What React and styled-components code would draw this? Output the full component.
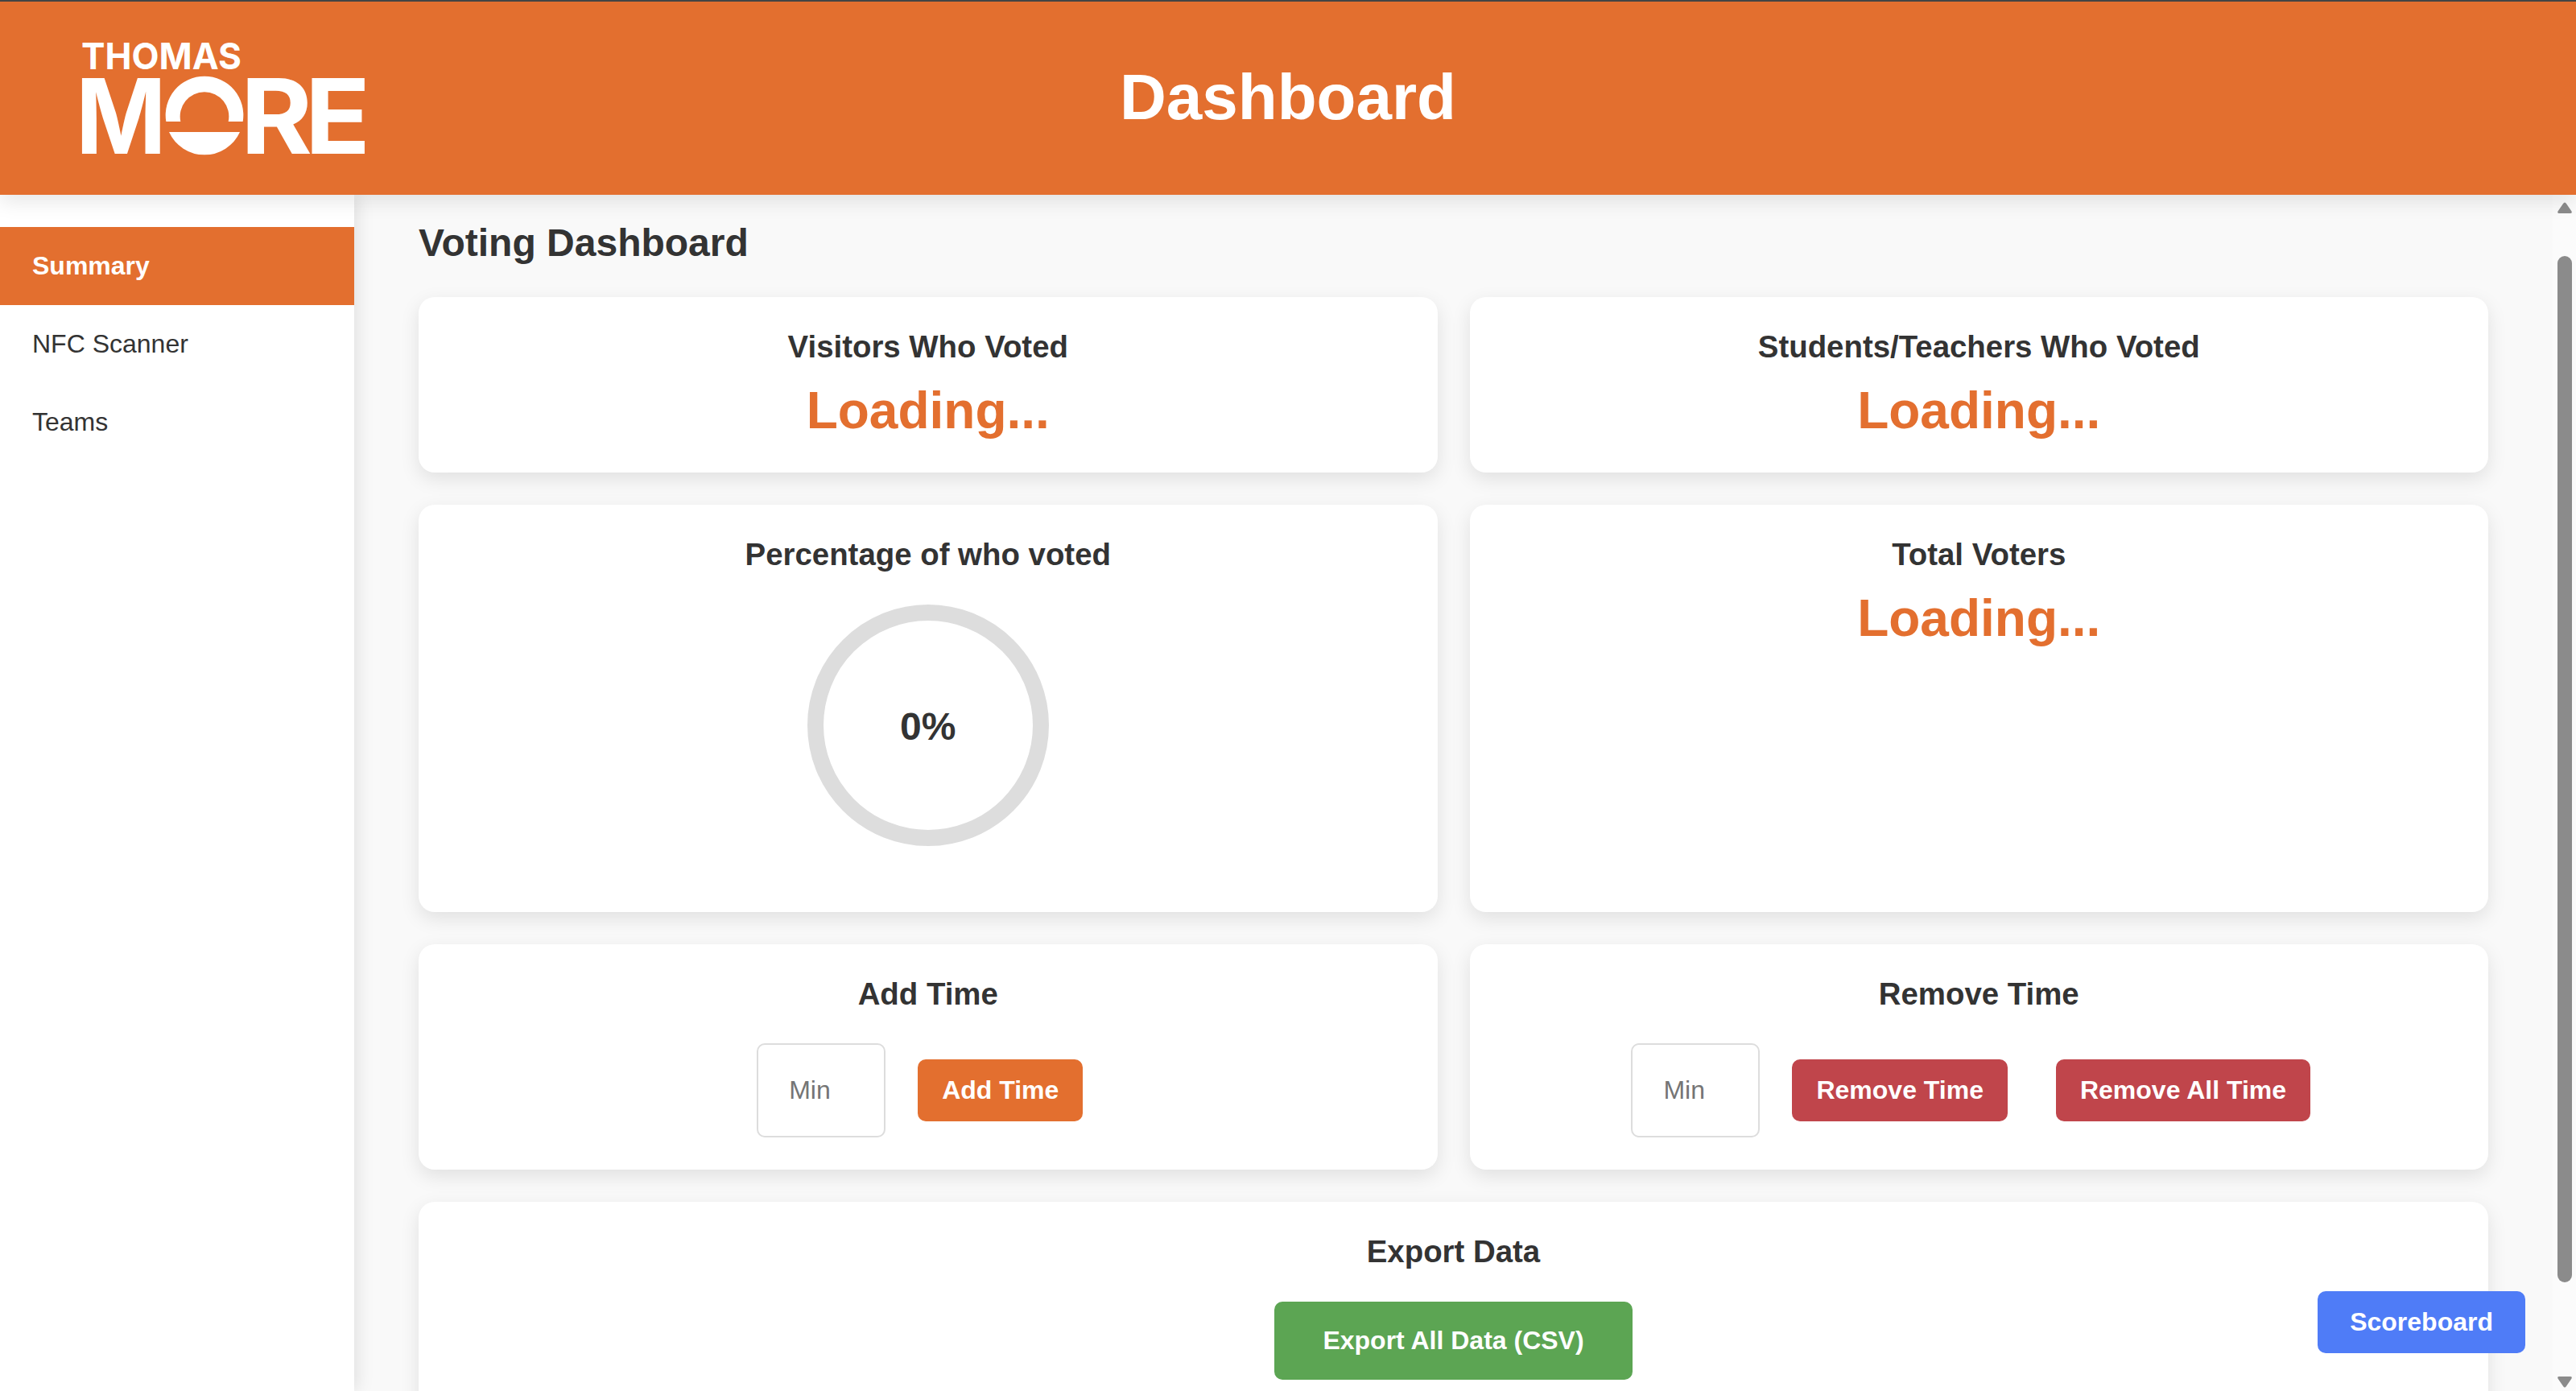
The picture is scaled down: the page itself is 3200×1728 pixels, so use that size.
import React from 'react';
import styled, { createGlobalStyle } from 'styled-components';

const ORANGE = '#e36f2f';

const GlobalStyle = createGlobalStyle`
  html, body {
    margin: 0;
    height: 100%;
    overflow: hidden;
    font-family: "Liberation Sans", Arial, sans-serif;
    color: #333;
  }
  #root {
    height: 100%;
  }
`;

const Logo = () => (
  <LogoSvg viewBox="0 0 1200 540" aria-label="Thomas More">
    <LogoThomas x="63" y="168" textLength="597" lengthAdjust="spacingAndGlyphs">THOMAS</LogoThomas>
    <LogoMore x="42" y="484" textLength="338" lengthAdjust="spacingAndGlyphs">M</LogoMore>
    <path
      fill="#fff"
      d="M379 363 A145 145 0 1 1 665 363 L611 363 A91 91 0 1 0 433 363 Z"
    />
    <path fill="#fff" d="M390 402 L654 402 A145 145 0 0 1 390 402 Z" />
    <LogoMore x="656" y="484" textLength="268" lengthAdjust="spacingAndGlyphs">R</LogoMore>
    <LogoMore x="896" y="484" textLength="244" lengthAdjust="spacingAndGlyphs">E</LogoMore>
  </LogoSvg>
);

const App = () => {
  return (
    <Page>
      <GlobalStyle />
      <Header>
        <Logo />
        <HeaderTitle>Dashboard</HeaderTitle>
      </Header>
      <Body>
        <Sidebar>
          <NavItem $active>Summary</NavItem>
          <NavItem>NFC Scanner</NavItem>
          <NavItem>Teams</NavItem>
        </Sidebar>
        <Main>
          <PageTitle>Voting Dashboard</PageTitle>
          <CardGrid>
            <Card>
              <CardTitle>Visitors Who Voted</CardTitle>
              <Value>Loading...</Value>
            </Card>
            <Card>
              <CardTitle>Students/Teachers Who Voted</CardTitle>
              <Value>Loading...</Value>
            </Card>
            <Card>
              <CardTitle>Percentage of who voted</CardTitle>
              <Ring>0%</Ring>
            </Card>
            <Card>
              <CardTitle>Total Voters</CardTitle>
              <Value>Loading...</Value>
            </Card>
            <Card>
              <CardTitle>Add Time</CardTitle>
              <TimeRow>
                <MinInput type="number" placeholder="Min" />
                <ActionButton $color={ORANGE}>Add Time</ActionButton>
              </TimeRow>
            </Card>
            <Card>
              <CardTitle>Remove Time</CardTitle>
              <TimeRow>
                <MinInput type="number" placeholder="Min" />
                <ActionButton $color="#c0454b">Remove Time</ActionButton>
                <ActionButton $color="#c0454b" $spaced>Remove All Time</ActionButton>
              </TimeRow>
            </Card>
            <WideCard>
              <CardTitle>Export Data</CardTitle>
              <ExportButton>Export All Data (CSV)</ExportButton>
            </WideCard>
          </CardGrid>
        </Main>
        <ScrollTrack>
          <ScrollArrow viewBox="0 0 18 14">
            <path d="M9 0.5 Q10 0.5 11 2 L17.5 11.5 Q18.5 14 16 14 L2 14 Q-0.5 14 0.5 11.5 L7 2 Q8 0.5 9 0.5 Z" />
          </ScrollArrow>
          <ScrollThumb />
          <ScrollArrow viewBox="0 0 18 14">
            <path d="M9 13.5 Q10 13.5 11 12 L17.5 2.5 Q18.5 0 16 0 L2 0 Q-0.5 0 0.5 2.5 L7 12 Q8 13.5 9 13.5 Z" />
          </ScrollArrow>
        </ScrollTrack>
        <ScoreboardButton>Scoreboard</ScoreboardButton>
      </Body>
    </Page>
  );
};

const Page = styled.div`
  height: 100%;
  display: flex;
  flex-direction: column;
`;

const Header = styled.header`
  position: relative;
  z-index: 3;
  box-sizing: border-box;
  flex: 0 0 242px;
  display: grid;
  grid-template-columns: 1fr auto 1fr;
  align-items: center;
  padding-bottom: 2px;
  border-top: 2px solid #444;
  background: ${ORANGE};
  box-shadow: 0 8px 24px rgba(0, 0, 0, 0.1);
`;

const LogoSvg = styled.svg`
  display: block;
  width: 400px;
  height: 180px;
  margin: 0 0 2px 80px;
  overflow: visible;
`;

const LogoThomas = styled.text`
  font-family: Inter, "Liberation Sans", sans-serif;
  font-weight: 700;
  font-size: 137px;
  fill: #fff;
`;

const LogoMore = styled.text`
  font-family: Inter, "Liberation Sans", sans-serif;
  font-weight: 700;
  font-size: 386px;
  fill: #fff;
`;

const HeaderTitle = styled.h1`
  margin: 0;
  font-size: 80px;
  font-weight: 700;
  color: #fff;
`;

const Body = styled.div`
  position: relative;
  flex: 1;
  min-height: 0;
  display: flex;
`;

const Sidebar = styled.nav`
  position: relative;
  z-index: 2;
  flex: 0 0 440px;
  box-sizing: border-box;
  padding-top: 40px;
  background: #fff;
  box-shadow: 4px 0 20px rgba(0, 0, 0, 0.1);
`;

const NavItem = styled.div`
  height: 97px;
  display: flex;
  align-items: center;
  padding: 0 40px;
  font-size: 32px;
  font-weight: ${({ $active }) => ($active ? 700 : 400)};
  color: ${({ $active }) => ($active ? '#fff' : '#333')};
  background: ${({ $active }) => ($active ? ORANGE : 'transparent')};
`;

const Main = styled.main`
  flex: 1;
  min-width: 0;
  overflow: hidden;
  box-sizing: border-box;
  padding: 32px 80px 0;
  background: #f9f9f9;
`;

const PageTitle = styled.h2`
  margin: 0 0 40px;
  font-size: 48px;
  font-weight: 700;
  color: #333;
`;

const CardGrid = styled.div`
  display: grid;
  grid-template-columns: 1fr 1fr;
  gap: 40px;
`;

const Card = styled.section`
  box-sizing: border-box;
  padding: 40px;
  background: #fff;
  border-radius: 20px;
  box-shadow: 0 8px 24px rgba(0, 0, 0, 0.1);
  text-align: center;
`;

const WideCard = styled(Card)`
  grid-column: 1 / -1;
  padding-bottom: 80px;
`;

const CardTitle = styled.h3`
  margin: 0 0 20px;
  font-size: 38.4px;
  font-weight: 700;
  color: #333;
`;

const Value = styled.div`
  font-size: 64px;
  font-weight: 700;
  color: ${ORANGE};
`;

const Ring = styled.div`
  box-sizing: border-box;
  width: 300px;
  height: 300px;
  margin: 40px auto 42px;
  padding-top: 2px;
  display: flex;
  align-items: center;
  justify-content: center;
  border: 20px solid #ddd;
  border-radius: 50%;
  font-size: 48px;
  font-weight: 700;
  color: #333;
`;

const TimeRow = styled.div`
  display: flex;
  align-items: center;
  justify-content: center;
  gap: 40px;
  margin-top: 39px;
  padding-right: 20px;
`;

const MinInput = styled.input`
  box-sizing: border-box;
  width: 160px;
  height: 117px;
  padding: 0 38px;
  border: 2px solid #ddd;
  border-radius: 10px;
  font-family: "Liberation Sans", Arial, sans-serif;
  font-size: 32px;
  background: #fff;
  appearance: textfield;
`;

const ActionButton = styled.button`
  height: 77px;
  padding: 0 30px;
  margin-left: ${({ $spaced }) => ($spaced ? '20px' : '0')};
  border: none;
  border-radius: 10px;
  font-family: "Liberation Sans", Arial, sans-serif;
  font-size: 32px;
  font-weight: 700;
  color: #fff;
  background: ${({ $color }) => $color};
`;

const ExportButton = styled(ActionButton)`
  display: block;
  height: 97px;
  margin: 40px auto 0;
  padding: 0 60px;
  background: #5ca553;
`;

const ScrollTrack = styled.div`
  flex: 0 0 29px;
  box-sizing: border-box;
  display: flex;
  flex-direction: column;
  align-items: center;
  padding: 9px 5px 4px 6px;
  background: #fbfbfb;
`;

const ScrollArrow = styled.svg`
  flex: none;
  width: 18px;
  height: 14px;
  fill: #8b8b8b;
`;

const ScrollThumb = styled.div`
  width: 18px;
  height: 275px;
  flex: 1;
  margin: 53px 0 117px;
  border-radius: 9px;
  background: #8b8b8b;
`;

const ScoreboardButton = styled(ActionButton)`
  position: absolute;
  right: 63px;
  bottom: 47px;
  z-index: 4;
  padding: 0 40px;
  background: #4f7cf7;
`;

export default App;
